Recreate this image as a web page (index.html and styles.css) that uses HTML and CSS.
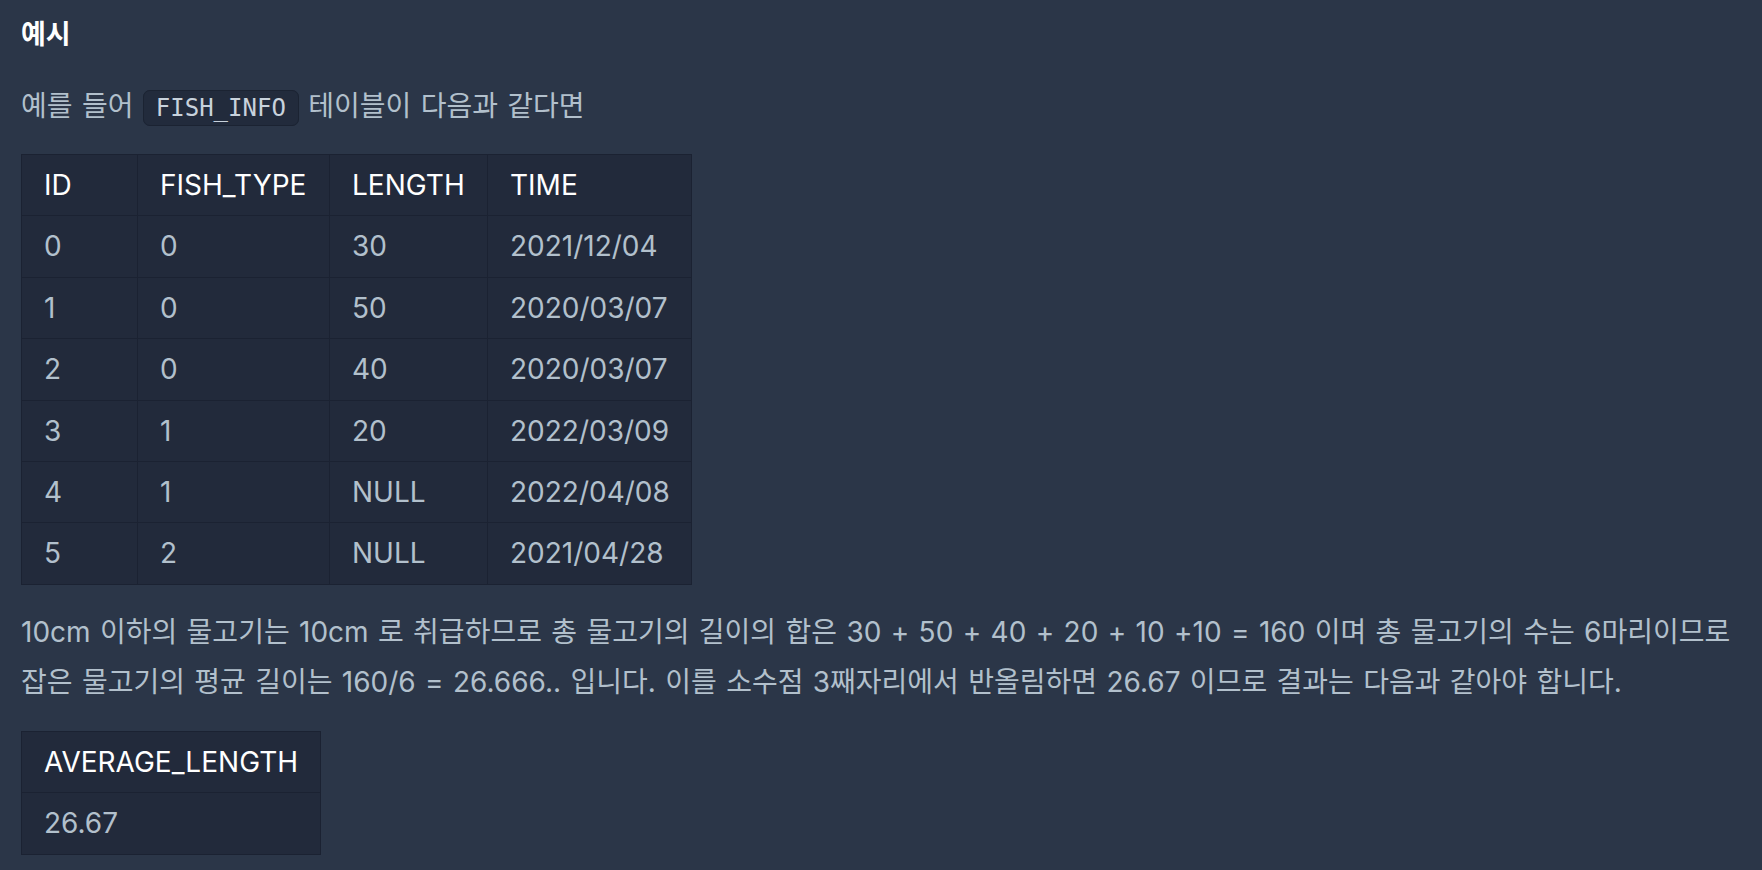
FILE: index.html
```html
<!DOCTYPE html>
<html lang="ko">
<head>
<meta charset="utf-8">
<title>예시</title>
<link rel="stylesheet" href="styles.css">
</head>
<body>
<div class="content">
  <h5 class="title">예시</h5>
  <p class="para">예를 들어 <code class="code">FISH_INFO</code> 테이블이 다음과 같다면</p>
  <table class="tbl tbl-main">
    <colgroup>
      <col class="c1"><col class="c2"><col class="c3"><col class="c4">
    </colgroup>
    <thead>
      <tr><th>ID</th><th>FISH_TYPE</th><th>LENGTH</th><th>TIME</th></tr>
    </thead>
    <tbody>
      <tr><td>0</td><td>0</td><td>30</td><td>2021/12/04</td></tr>
      <tr><td>1</td><td>0</td><td>50</td><td>2020/03/07</td></tr>
      <tr><td>2</td><td>0</td><td>40</td><td>2020/03/07</td></tr>
      <tr><td>3</td><td>1</td><td>20</td><td>2022/03/09</td></tr>
      <tr><td>4</td><td>1</td><td>NULL</td><td>2022/04/08</td></tr>
      <tr><td>5</td><td>2</td><td>NULL</td><td>2021/04/28</td></tr>
    </tbody>
  </table>
  <p class="para para-long">10cm 이하의 물고기는 10cm 로 취급하므로 총 물고기의 길이의 합은 30 + 50 + 40 + 20 + 10 +10 = 160 이며 총 물고기의 수는 6마리이므로 잡은 물고기의 평균 길이는 160/6 = 26.666.. 입니다. 이를 소수점 3째자리에서 반올림하면 26.67 이므로 결과는 다음과 같아야 합니다.</p>
  <table class="tbl tbl-result">
    <thead>
      <tr><th>AVERAGE_LENGTH</th></tr>
    </thead>
    <tbody>
      <tr><td>26.67</td></tr>
    </tbody>
  </table>
</div>
</body>
</html>
```

FILE: styles.css
```css
html, body {
  margin: 0;
  padding: 0;
  background: #2b3648;
}

body {
  font-family: "Inter", "Noto Sans CJK KR", sans-serif;
  color: #b2c0cc;
  overflow: hidden;
}

.content {
  padding: 10px 21px 0 21px;
}

.title {
  margin: 0;
  font-size: 27px;
  line-height: 50px;
  font-weight: 700;
  color: #ffffff;
}

.para {
  margin: 21px 0 0 0;
  font-size: 28px;
  line-height: 50px;
  word-spacing: 1.5px;
  word-break: keep-all;
  color: #b2c0cc;
}

.para-long {
  margin-top: 22px;
}

.code {
  font-family: "DejaVu Sans Mono", "Liberation Mono", monospace;
  font-size: 24px;
  word-spacing: 0;
  color: #c8d2dc;
  background: #222b3c;
  border: 1px solid #1b2332;
  border-radius: 7px;
  padding: 3px 12px;
}

.tbl {
  border-collapse: collapse;
  margin-top: 21px;
  background: #222a3b;
  font-size: 28px;
  line-height: 44.4px;
  table-layout: fixed;
}

.tbl th,
.tbl td {
  border: 1px solid #1b2232;
  padding: 8px 22px;
  text-align: left;
  white-space: nowrap;
}

.tbl th {
  font-weight: 400;
  color: #ffffff;
}

.tbl td {
  color: #b2c0cc;
}

.tbl-main {
  width: 670px;
}

.c1 { width: 116px; }
.c2 { width: 192px; }
.c3 { width: 158px; }
.c4 { width: 204px; }

.tbl-result {
  width: 300px;
  margin-top: 24px;
}
```
